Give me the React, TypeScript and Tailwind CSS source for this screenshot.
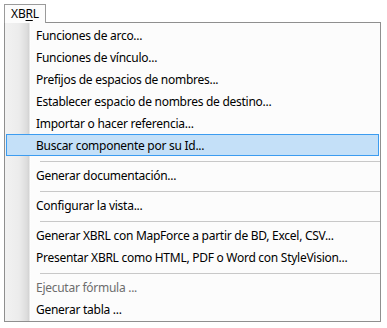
import React from "react";

type Row = { t: "item"; label: string; hl?: boolean; dis?: boolean } | { t: "sep" };

const rows: Row[] = [
  { t: "item", label: "Funciones de arco..." },
  { t: "item", label: "Funciones de vínculo..." },
  { t: "item", label: "Prefijos de espacios de nombres..." },
  { t: "item", label: "Establecer espacio de nombres de destino..." },
  { t: "item", label: "Importar o hacer referencia..." },
  { t: "item", label: "Buscar componente por su Id...", hl: true },
  { t: "sep" },
  { t: "item", label: "Generar documentación..." },
  { t: "sep" },
  { t: "item", label: "Configurar la vista..." },
  { t: "sep" },
  { t: "item", label: "Generar XBRL con MapForce a partir de BD, Excel, CSV..." },
  { t: "item", label: "Presentar XBRL como HTML, PDF o Word con StyleVision..." },
  { t: "sep" },
  { t: "item", label: "Ejecutar fórmula ...", dis: true },
  { t: "item", label: "Generar tabla ..." },
];

export default function App() {
  return (
    <div
      className="w-[387px] h-[328px] bg-white text-[12px] leading-none text-black"
      style={{ fontFamily: '"Noto Sans", "Open Sans", sans-serif' }}
    >
      <div className="pl-[4px] pt-[4px]">
        <div className="relative z-10 -mb-px flex h-[19px] w-[42px] items-center justify-center border border-b-0 border-[#9a9a9a] bg-[#fcfcfc] tracking-[-0.2px]">
          <span>
            XB<span className="underline underline-offset-2">R</span>L
          </span>
        </div>
        <div className="w-[377px] h-[300px] border border-[#8f8f8f] bg-[#fcfcfc] bg-[linear-gradient(to_right,#f2f2f2_0px,#ececec_14px,#dcdcdc_22px,#d2d2d2_24px,#ffffff_25px,#fcfcfc_26px)] pt-[1px] tracking-[-0.27px]">
          {rows.map((r, i) =>
            r.t === "sep" ? (
              <div key={i} className="h-[8px] pl-[35px] pt-[5px]">
                <div className="h-px bg-[#c8c8c8]" />
              </div>
            ) : (
              <div
                key={i}
                className={
                  "mx-[1px] flex h-[22px] items-center border pl-[29px] pt-[1px] " +
                  (r.hl ? "border-[#3c9cf0] bg-[#c4e0f8]" : "border-transparent") +
                  (r.dis ? " text-[#6d6d6d]" : "")
                }
              >
                {r.label}
              </div>
            )
          )}
        </div>
      </div>
    </div>
  );
}
